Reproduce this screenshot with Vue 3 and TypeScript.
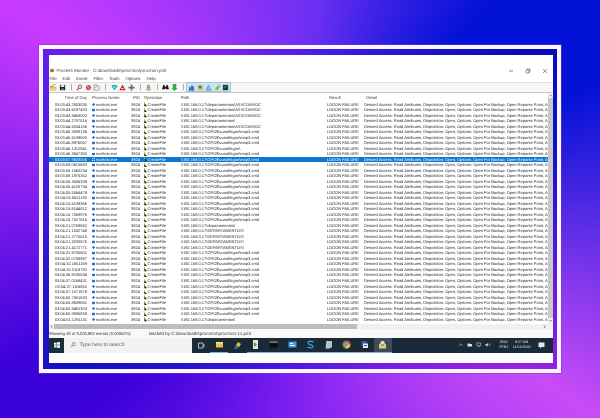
<script setup lang="ts">
interface Row {
  time: string
  path: string
}

const asscom = '\\\\192.168.0.17\\departamentos\\ASSCOMSOC'
const dept = '\\\\192.168.0.17\\departamentos\\'
const upper = '\\\\192.168.0.17\\DEPARTAMENTOS\\'
const map3 = '\\\\192.168.0.17\\GPO$\\vunaflegon\\map3.cmd'
const gpo = '\\\\192.168.0.17\\GPO$\\vunaflegon\\'

const detail = 'Desired Access: Read Attributes, Disposition: Open, Options: Open For Backup, Open Reparse Point, At'

const times: [string, string][] = [
  ['03:03:43.2503030', asscom],
  ['03:03:43.6197433', asscom],
  ['03:03:43.9458002', asscom],
  ['03:03:44.2757516', dept],
  ['03:03:44.6034156', asscom],
  ['03:03:45.3009136', map3],
  ['03:03:45.6139600', map3],
  ['03:03:45.8976067', map3],
  ['03:03:46.1312941', gpo],
  ['03:03:46.3647350', map3],
  ['03:03:57.9503006', map3],
  ['03:03:58.0615693', map3],
  ['03:03:58.1560234', map3],
  ['03:03:58.1975352', map3],
  ['03:04:05.3006339', map3],
  ['03:04:05.4125734', map3],
  ['03:04:05.5064479', map3],
  ['03:04:05.5521192', map3],
  ['03:04:15.6139366', map3],
  ['03:04:15.6144812', map3],
  ['03:04:15.7558976', map3],
  ['03:04:15.7527816', map3],
  ['03:04:21.0759562', dept],
  ['03:04:21.1532748', upper],
  ['03:04:21.2775515', upper],
  ['03:04:21.3230876', upper],
  ['03:04:21.4172771', upper],
  ['03:04:31.9730601', map3],
  ['03:04:32.0708997', map3],
  ['03:04:32.1651169', map3],
  ['03:04:32.2118782', map3],
  ['03:04:36.9130534', map3],
  ['03:04:37.0168431', map3],
  ['03:04:37.1116852', map3],
  ['03:04:37.1571878', map3],
  ['03:04:50.7501633', map3],
  ['03:04:50.8509681', map3],
  ['03:04:50.9491303', map3],
  ['03:04:50.9936839', map3],
  ['03:04:51.1291131', dept],
]

const rows: Row[] = times.map(([time, path]) => ({ time, path }))
const selected = 10
const menu = ['File', 'Edit', 'Event', 'Filter', 'Tools', 'Options', 'Help']
</script>

<template>
  <div class="page">
    <div class="frame">
      <div class="band">
        <div class="screen">
          <div class="blank"></div>

          <div class="titlebar">
            <svg class="app-icon" viewBox="0 0 6 6">
              <rect x="0" y="1" width="5" height="4" fill="#c9a14a" />
              <rect x="1" y="2" width="3" height="2" fill="#4a6b3a" />
              <path d="M3 0h3v2H3z" fill="#e8d9a0" />
            </svg>
            <span class="title">Process Monitor - C:\downloads\procmon\procmon.pml</span>
            <div class="winbtns">
              <svg viewBox="0 0 6 6"><path d="M1 3h4" stroke="#555" stroke-width=".7" /></svg>
              <svg viewBox="0 0 6 6"><path d="M1 2h3v3H1zM2 2V1h3v3H4" fill="none" stroke="#555" stroke-width=".6" /></svg>
              <svg viewBox="0 0 6 6"><path d="M1 1l4 4M5 1L1 5" stroke="#555" stroke-width=".6" /></svg>
            </div>
          </div>

          <div class="menubar">
            <span v-for="m in menu" :key="m" class="menu-item">{{ m }}</span>
          </div>

          <div class="toolbar">
            <span class="tool"><svg viewBox="0 0 8 8"><path d="M0 2h3l1 1h3v4H0z" fill="#c9a23c" /><path d="M1 4h7L7 7H0z" fill="#e9d27a" /><path d="M3 2l2-2 1 1" stroke="#2d7a2d" fill="none" stroke-width=".7" /></svg></span>
            <span class="tool"><svg viewBox="0 0 8 8"><rect x="1" y="1" width="6" height="6" fill="#1c1c28" /><rect x="2" y="1" width="4" height="2.4" fill="#e8e8e8" /><rect x="2.5" y="5" width="3" height="2" fill="#77777f" /></svg></span>
            <span class="tool sep"></span>
            <span class="tool"><svg viewBox="0 0 8 8"><circle cx="4.6" cy="3.2" r="2.1" fill="#e8d8d8" stroke="#a33" stroke-width=".8" /><path d="M3 5L1 7" stroke="#8a2f2f" stroke-width="1.2" /></svg></span>
            <span class="tool"><svg viewBox="0 0 8 8"><circle cx="4" cy="4" r="3" fill="#c94a5a" /><path d="M2 2l4 4" stroke="#f4d8dc" stroke-width=".8" /></svg></span>
            <span class="tool"><svg viewBox="0 0 8 8"><path d="M1 1h4l2 2v4H1z" fill="#f4f4f4" stroke="#777" stroke-width=".7" /><path d="M2 5l3-3" stroke="#6a8a4a" stroke-width=".9" /></svg></span>
            <span class="tool sep"></span>
            <span class="tool"><svg viewBox="0 0 8 8"><path d="M0.5 2.5L2 1h4l1.5 1.5L4 7z" fill="#18a8a0" /><path d="M2 2.5h4L4 5z" fill="#8ff0e4" /></svg></span>
            <span class="tool"><svg viewBox="0 0 8 8"><path d="M4 .5L7.6 7H.4z" fill="#c8202c" /><rect x="2.6" y="4.4" width="2.8" height="1.4" fill="#f5e0a0" /></svg></span>
            <span class="tool"><svg viewBox="0 0 8 8"><path d="M3 .5h2V3h2.500v2H5v2.500H3V5H.5V3H3z" fill="#6f6f6f" /></svg></span>
            <span class="tool sep"></span>
            <span class="tool"><svg viewBox="0 0 8 8"><path d="M3 1l2 0 1 6H2z" fill="#c8b690" stroke="#8a7a58" stroke-width=".5" /><path d="M2.500 3.500h3" stroke="#5a5040" stroke-width=".6" /></svg></span>
            <span class="tool sep"></span>
            <span class="tool"><svg viewBox="0 0 8 8"><path d="M1.500 1h1.500v2h2V1h1.500L8 6H4.600L4 4.500 3.400 6H0z" fill="#15151c" /></svg></span>
            <span class="tool"><svg viewBox="0 0 8 8"><path d="M2 0h4v4.500h1.500L4 8 .5 4.500H2z" fill="#2fae46" /></svg></span>
            <span class="tool sep"></span>
            <div class="toggles">
              <span class="tool"><svg viewBox="0 0 8 8"><path d="M1 7V3l2 1 1-3 3 2v4z" fill="#3c7fa4" /><path d="M1 7h6" stroke="#1d4f70" stroke-width=".7" /></svg></span>
              <span class="tool"><svg viewBox="0 0 8 8"><rect x="1" y="1" width="6" height="6" fill="#d8c94c" /><rect x="2" y="2" width="3" height="3" fill="#2f6fa8" /></svg></span>
              <span class="tool"><svg viewBox="0 0 8 8"><path d="M4 1l3 6H1z" fill="#86c0e4" stroke="#3a78a8" stroke-width=".6" /></svg></span>
              <span class="tool"><svg viewBox="0 0 8 8"><path d="M1 6l3-4 3 1-3 4z" fill="#8cb43c" /><path d="M4 1h3v2" stroke="#c8a83c" fill="none" stroke-width=".8" /></svg></span>
              <span class="tool"><svg viewBox="0 0 8 8"><rect x="1" y="1" width="6" height="6" fill="#123c24" /><path d="M2 5l1-2 1 1 1-2 1 1" stroke="#42d060" fill="none" stroke-width=".6" /></svg></span>
            </div>
          </div>

          <div class="table-area">
            <div class="table">
              <div class="cols head">
                <span class="c-time">Time of Day</span>
                <span>Process Name</span>
                <span class="h-pid">PID</span>
                <span>Operation</span>
                <span>Path</span>
                <span class="h-shift">Result</span>
                <span class="h-shift">Detail</span>
              </div>
              <div class="list">
                <div
                  v-for="(row, i) in rows"
                  :key="row.time"
                  class="cols row"
                  :class="{ active: i === selected }"
                >
                  <span class="c-time">{{ row.time }}</span>
                  <span class="c-name"><i class="proc-icon"></i>svchost.exe</span>
                  <span>3924</span>
                  <span class="c-name">
                    <svg class="op-icon" viewBox="0 0 4 5">
                      <path d="M0 0h1.400v5H0z" fill="#5aa02c" />
                      <path d="M1 1.500L4 5H1z" fill="#1c1c1c" />
                      <path d="M0 0h1.400v1.500H0z" fill="#e0c83c" />
                    </svg>CreateFile
                  </span>
                  <span>{{ row.path }}</span>
                  <span>LOGON FAILURE</span>
                  <span class="c-detail">{{ detail }}</span>
                </div>
              </div>
            </div>
            <div class="vscroll">
              <svg class="arrow" viewBox="0 0 6 6"><path d="M1.500 3.800L3 2.200l1.500 1.600" fill="none" stroke="#555" stroke-width=".7" /></svg>
              <div class="vthumb"></div>
              <svg class="arrow" viewBox="0 0 6 6"><path d="M1.500 2.200L3 3.800l1.500-1.600" fill="none" stroke="#555" stroke-width=".7" /></svg>
            </div>
          </div>

          <div class="hscroll">
            <svg class="arrow" viewBox="0 0 6 6"><path d="M3.800 1.500L2.200 3l1.600 1.500" fill="none" stroke="#444" stroke-width=".7" /></svg>
            <div class="hthumb"></div>
            <svg class="arrow" viewBox="0 0 6 6"><path d="M2.200 1.500L3.800 3 2.200 4.500" fill="none" stroke="#444" stroke-width=".7" /></svg>
          </div>

          <div class="status">
            <span class="st-left">Showing 49 of 9,200,862 events (0.00052%)</span>
            <span class="st-right">Backed by C:\downloads\procmon\procmon-11.pml</span>
          </div>

          <div class="taskbar">
            <div class="start">
              <svg viewBox="0 0 8 8"><path d="M0 1l3.500-.5V3.800H0zM4 .4L8 0v3.800H4zM0 4.200h3.500v3.300L0 7zM4 4.200h4V8l-4-.5z" fill="#eef4f8" /></svg>
            </div>
            <div class="search">
              <svg viewBox="0 0 8 8"><circle cx="5" cy="3" r="2.200" fill="none" stroke="#444" stroke-width=".7" /><path d="M3.400 4.600L1 7" stroke="#444" stroke-width=".8" /></svg>
              <span>Type here to search</span>
            </div>
            <div class="apps">
              <span class="app"><svg viewBox="0 0 9 9"><path d="M1.500 2h4.500v5H1.500zM7 3v3" fill="none" stroke="#d8e0e8" stroke-width=".8" /></svg></span>
              <span class="app run"><svg viewBox="0 0 9 9"><rect x="1" y="2" width="7" height="5.500" fill="#e8c04c" /><rect x="1" y="2" width="7" height="1.500" fill="#f4e090" /></svg></span>
              <span class="app"><svg viewBox="0 0 9 9"><path d="M2 6l3-5 3 2-2 3z" fill="#e4c82c" /><path d="M1 8l2-4 3 2-2 2z" fill="#2468b8" /></svg></span>
              <span class="app run"><svg viewBox="0 0 9 9"><path d="M2 0h5v9H2z" fill="#e8e8d8" /><path d="M3 2l3 2.500L3 7z" fill="#4e9a30" /></svg></span>
              <span class="app run"><svg viewBox="0 0 9 9"><rect x=".5" y="1.500" width="8" height="6" fill="#0c0c10" /><rect x=".5" y="1.500" width="8" height="1.200" fill="#a8a8a8" /></svg></span>
              <span class="app run"><svg viewBox="0 0 9 9"><rect x=".5" y="1.500" width="8" height="6" fill="#3aa0d8" /><rect x="2" y="3" width="3" height="1" fill="#eaf6fc" /><rect x="2" y="5" width="5" height="1" fill="#eaf6fc" /></svg></span>
              <span class="app run"><svg viewBox="0 0 9 9"><path d="M7.500 2.200C6 .8 2 .8 2 3c0 2.300 5 1.200 5 3.400C7 8.400 3 8.300 1.500 7" fill="none" stroke="#2f9ed8" stroke-width="1.300" /></svg></span>
              <span class="app run"><svg viewBox="0 0 9 9"><path d="M3 1h5v6L6 8.500H2z" fill="#a8c8c0" /><path d="M3 1l-1 7.500" stroke="#e8f0f0" stroke-width=".8" /></svg></span>
              <span class="app run"><svg viewBox="0 0 9 9"><circle cx="4.500" cy="4.500" r="4" fill="#d8483c" /><path d="M4.500 4.500L8.500 4.500A4 4 0 0 1 3 8.200z" fill="#e8c83c" /><path d="M4.500 4.500L3 8.200A4 4 0 0 1 1 2.500z" fill="#3ca050" /><circle cx="4.500" cy="4.500" r="1.700" fill="#4a88e0" stroke="#eee" stroke-width=".5" /></svg></span>
              <span class="app run"><svg viewBox="0 0 9 9"><rect x="1.500" y="1" width="5" height="5" fill="#3a58a8" /><rect x="3" y="3.500" width="5" height="4.500" fill="#e4e8f0" /><rect x="4" y="5" width="3" height="1" fill="#3a58a8" /></svg></span>
              <span class="app current"><svg viewBox="0 0 9 9"><path d="M1 4h7v4.500H1z" fill="#e4c872" /><path d="M3 1l3 0 1 3H2z" fill="#d8d8c8" /><path d="M3 5h3" stroke="#4a6a3a" stroke-width=".8" /></svg></span>
            </div>
            <div class="tray">
              <svg viewBox="0 0 6 6"><path d="M1 4l2-2 2 2" fill="none" stroke="#d8e0e8" stroke-width=".7" /></svg>
              <svg viewBox="0 0 6 6"><path d="M.5 1.500h2l.8.8h2.200v2.500h-5z" fill="#d8e0e8" /></svg>
              <svg viewBox="0 0 6 6"><path d="M.8 1h4.400v3H.8zM2 5h2" fill="none" stroke="#d8e0e8" stroke-width=".6" /></svg>
              <svg viewBox="0 0 6 6"><path d="M.5 2.200h1.200L3 1v4L1.700 3.800H.5z" fill="#d8e0e8" /><path d="M4 2c.6.6.6 1.400 0 2M4.900 1.300c1 1 1 2.400 0 3.400" fill="none" stroke="#d8e0e8" stroke-width=".45" /></svg>
              <div class="lang"><span>ENG</span><span>PTBJ</span></div>
              <div class="clock"><span>9:27 AM</span><span>11/21/2020</span></div>
              <svg class="notify" viewBox="0 0 7 7"><path d="M.5.500h6v4.500H3.500L2 6.500V5H.5z" fill="#e4eaf0" /></svg>
            </div>
          </div>
          <div class="under"></div>
        </div>
      </div>
    </div>
  </div>
</template>

<style scoped>
.page {
  width: 600px;
  height: 418px;
  box-sizing: border-box;
  padding: 45px 39px 0;
  overflow: hidden;
  background: conic-gradient(from 55deg at 50% 50%, #0212d6 0deg, #0212d6 12deg, #c84cf8 70deg, #7a1ef0 130deg, #3a00d8 172deg, #3a00d8 186deg, #c83cff 250deg, #6a2ff2 310deg, #0212d6 348deg);
  font-family: "Liberation Sans", Arial, sans-serif;
  text-rendering: geometricPrecision;
}

.frame {
  height: 328px;
  box-sizing: border-box;
  padding: 4px;
  background: #fbf6fd;
  outline: 1px solid rgba(120, 60, 200, 0.5);
}

.band {
  height: 100%;
  box-sizing: border-box;
  padding: 6px 4px 6px 6px;
  background: conic-gradient(from 55deg at 50% 50%, #0a0cb8 0deg, #0a10c8 20deg, #9a22e0 70deg, #4a18e0 130deg, #1410c0 180deg, #5a1ce8 240deg, #8a22ee 270deg, #3a1ce4 320deg, #0a0cb8 360deg);
}

.screen {
  height: 100%;
  display: flex;
  flex-direction: column;
  background: #fff;
  color: #2c2c2c;
  filter: blur(0.3px);
}

.blank {
  height: 12px;
  flex: none;
}

.titlebar {
  height: 7.5px;
  flex: none;
  display: flex;
  align-items: center;
  padding-left: 1px;
  font-size: 4.500px;
  color: #444;
}

.app-icon {
  width: 5px;
  height: 5px;
  margin-right: 1.500px;
}

.winbtns {
  margin-left: auto;
  display: flex;
  gap: 11px;
  padding-right: 5.500px;
}

.winbtns svg {
  width: 6px;
  height: 6px;
}

.menubar {
  height: 7px;
  flex: none;
  display: flex;
  align-items: center;
  padding-left: 0.500px;
  font-size: 4.400px;
  color: #333;
}

.menu-item {
  margin-right: 6px;
}

.toolbar {
  height: 8.500px;
  flex: none;
  margin-top: 0.500px;
  display: flex;
  align-items: center;
  padding-left: 0.700px;
  background: #f6f6f6;
  border-top: 1px solid #e0e0e0;
  border-bottom: 1.500px solid #c8c8c8;
}

.tool {
  width: 8.600px;
  height: 8px;
  flex: none;
  display: flex;
  align-items: center;
  justify-content: center;
}

.tool svg {
  width: 7px;
  height: 7px;
}

.tool.sep::before {
  content: "";
  width: 0.600px;
  height: 6px;
  background: #b0b0b0;
}

.toggles {
  display: flex;
  background: #cfe3f4;
  outline: 0.500px solid #9cc4e4;
}

.table-area {
  flex: 1;
  min-height: 0;
  display: flex;
}

.table {
  flex: 1;
  min-width: 0;
  display: flex;
  flex-direction: column;
}

.cols {
  display: grid;
  grid-template-columns: 43px 39px 13px 36.700px 146px 37.300px 183.700px;
  font-size: 4px;
  white-space: nowrap;
}

.cols > span {
  overflow: hidden;
}

.head {
  height: 9px;
  flex: none;
  align-items: center;
  color: #444;
  font-size: 4.200px;
}

.c-time {
  text-align: right;
  padding-right: 5px;
}

.h-pid {
  padding-left: 2px;
}

.h-shift {
  padding-left: 2.200px;
}

.list {
  flex: 1;
  min-height: 0;
  overflow: hidden;
}

.row {
  height: 5.530px;
  line-height: 5.530px;
}

.row.active {
  background: #0a78d4;
  color: #f2f8fd;
}

.c-name {
  display: flex;
  align-items: center;
}

.proc-icon {
  width: 3px;
  height: 3.500px;
  margin-right: 1px;
  flex: none;
  background: radial-gradient(circle, #2b6fd0 45%, #dbe7f6 60%);
}

.op-icon {
  width: 3px;
  height: 4.500px;
  margin-right: 0.500px;
  flex: none;
}

.vscroll {
  width: 5.300px;
  flex: none;
  display: flex;
  flex-direction: column;
  background: #f0f0f0;
}

.arrow {
  width: 5.300px;
  height: 5.300px;
  flex: none;
}

.vthumb {
  flex: 1;
  background: #c8c8c8;
}

.hscroll {
  height: 5.300px;
  flex: none;
  display: flex;
  background: #f0f0f0;
}

.hthumb {
  width: 303px;
  background: #bdbdbd;
}

.hscroll .arrow:last-child {
  margin-left: auto;
  margin-right: 6px;
}

.status {
  height: 9px;
  flex: none;
  display: flex;
  align-items: center;
  font-size: 4.150px;
  color: #333;
  background: #f8f8f8;
}

.st-left {
  width: 100px;
}

.st-right {
  font-size: 4.500px;
}

.taskbar {
  height: 14.700px;
  display: flex;
  align-items: stretch;
  background: #1b2a38;
  color: #dfe6ec;
  flex: none;
}

.start {
  width: 15px;
  display: flex;
  align-items: center;
  justify-content: center;
  background: #16303e;
}

.start svg {
  width: 6px;
  height: 6px;
}

.search {
  width: 128px;
  display: flex;
  align-items: center;
  padding-left: 5.500px;
  box-sizing: border-box;
  background: #f2f2f2;
  color: #5a5a5a;
  font-size: 5.100px;
}

.search svg {
  width: 6px;
  height: 6px;
  margin-right: 4px;
}

.apps {
  display: flex;
}

.app {
  width: 18.200px;
  flex: none;
  display: flex;
  align-items: center;
  justify-content: center;
  box-sizing: border-box;
}

.app svg {
  width: 9px;
  height: 9px;
}

.app.run {
  border-bottom: 0.700px solid #7fb4dc;
}

.app.current {
  background: #3c4c5c;
  border-bottom: 0.700px solid #7fb4dc;
}

.tray {
  margin-left: auto;
  display: flex;
  align-items: center;
  gap: 3.500px;
  padding-right: 8px;
}

.tray > svg {
  width: 5.500px;
  height: 5.500px;
}

.lang,
.clock {
  display: flex;
  flex-direction: column;
  align-items: center;
  font-size: 3.600px;
  line-height: 5.600px;
}

.lang {
  margin-left: 5px;
}

.clock {
  margin: 0 4px 0 1px;
}

.tray > .notify {
  width: 7px;
  height: 7px;
}

.under {
  height: 10.500px;
  flex: none;
  background: #fff;
}
</style>

<style>
body {
  margin: 0;
}
</style>
